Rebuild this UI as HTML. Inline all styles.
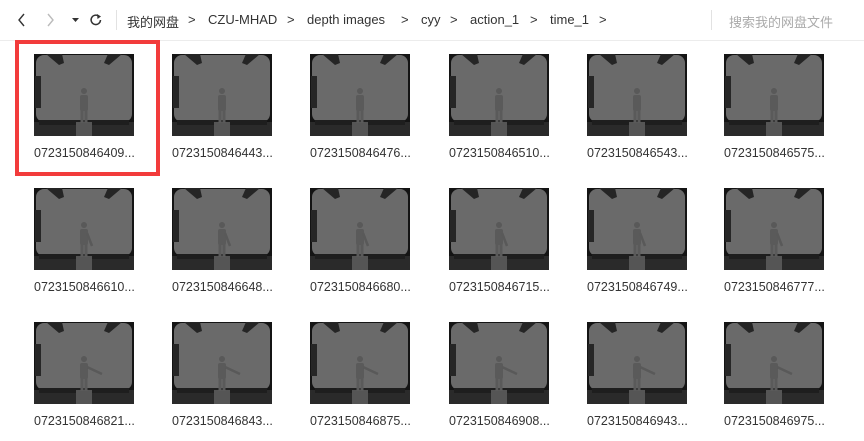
<!DOCTYPE html>
<html><head><meta charset="utf-8"><style>
body{margin:0;width:864px;height:441px;background:#fff;overflow:hidden;font-family:"Liberation Sans","Noto Sans CJK SC",sans-serif;position:relative}
.bar{position:absolute;left:0;top:0;width:864px;height:40px;border-bottom:1px solid #ececec}
.t{position:absolute;top:12px;font-size:13px;color:#333;white-space:nowrap}
.sep{position:absolute;top:10px;width:1px;height:20px;background:#e2e2e2}
.cell{position:absolute;width:110px}
.cell svg{position:absolute;left:0;top:0}
.cap{position:absolute;left:0;top:92px;font-size:12.5px;color:#333;white-space:nowrap}
.red{position:absolute;left:15px;top:40px;width:137px;height:128px;border:4px solid #f23b3b}
</style></head><body>
<div class="bar">
<svg style="position:absolute;left:17px;top:13px" width="10" height="14"><path d="M7 1L2 7L7 13" fill="none" stroke="#333" stroke-width="1.4"/></svg>
<svg style="position:absolute;left:46px;top:13px" width="10" height="14"><path d="M2 1L7 7L2 13" fill="none" stroke="#bbb" stroke-width="1.4"/></svg>
<svg style="position:absolute;left:72px;top:18px" width="8" height="5"><path d="M0 0H7L3.5 4Z" fill="#333"/></svg>
<svg style="position:absolute;left:89px;top:13px" width="14" height="14"><path d="M11.5 7A4.7 4.7 0 1 1 9.5 3" fill="none" stroke="#333" stroke-width="1.5"/><path d="M8 1L12 3.5L8.5 6Z" fill="#333"/></svg>
<div class="sep" style="left:116px"></div>
<span class="t" style="left:127px">我的网盘</span>
<span class="t" style="left:188px">&gt;</span>
<span class="t" style="left:208px">CZU-MHAD</span>
<span class="t" style="left:287px">&gt;</span>
<span class="t" style="left:307px">depth images</span>
<span class="t" style="left:401px">&gt;</span>
<span class="t" style="left:421px">cyy</span>
<span class="t" style="left:450px">&gt;</span>
<span class="t" style="left:470px">action_1</span>
<span class="t" style="left:530px">&gt;</span>
<span class="t" style="left:550px">time_1</span>
<span class="t" style="left:599px">&gt;</span>
<div class="sep" style="left:711px"></div>
<span class="t" style="left:729px;color:#aaa">搜索我的网盘文件</span>
</div>
<div class="red"></div>
<div id="g"></div>
<script>
var xs=[34,172,310,449,587,724],ys=[54,188,322];
var names=[["0723150846409...","0723150846443...","0723150846476...","0723150846510...","0723150846543...","0723150846575..."],
["0723150846610...","0723150846648...","0723150846680...","0723150846715...","0723150846749...","0723150846777..."],
["0723150846821...","0723150846843...","0723150846875...","0723150846908...","0723150846943...","0723150846975..."]];
var h='';
for(var r=0;r<3;r++)for(var c=0;c<6;c++){
var arm=r==0?'':(r==1?'<path d="M53 45L58 58" stroke="#595959" stroke-width="2.5"/>':'<path d="M53 45L68 52" stroke="#595959" stroke-width="2.5"/>');
h+='<div class="cell" style="left:'+xs[c]+'px;top:'+ys[r]+'px"><svg width="100" height="82" viewBox="0 0 100 82"><rect width="100" height="82" fill="#141414"/><rect x="2" y="1" width="96" height="67" rx="8" fill="#6a6a6a"/><polygon points="12,0 28,0 30,9 25,11" fill="#252525"/><polygon points="88,0 74,0 70,9 75,11" fill="#252525"/><rect x="1" y="22" width="6" height="32" fill="#262626"/><rect x="0" y="68" width="100" height="14" fill="#2a2a2a"/><rect x="5" y="66" width="90" height="5" fill="#1e1e1e"/><rect x="42" y="68" width="16" height="14" fill="#555"/><circle cx="50" cy="37" r="3" fill="#595959"/><rect x="46" y="41" width="8" height="16" rx="2" fill="#5a5a5a"/><rect x="46.5" y="56" width="3" height="13" fill="#5a5a5a"/><rect x="50.5" y="56" width="3" height="13" fill="#5a5a5a"/>'+arm+'</svg><div class="cap">'+names[r][c]+'</div></div>';
}
document.getElementById('g').innerHTML=h;
</script>
</body></html>
